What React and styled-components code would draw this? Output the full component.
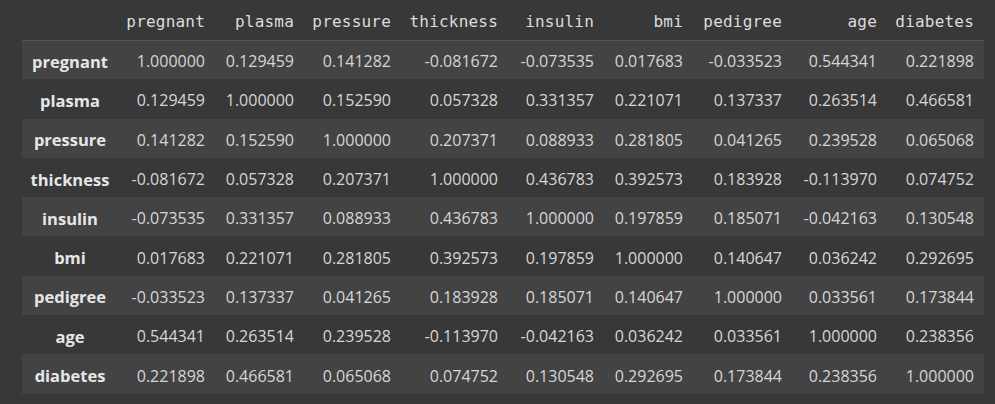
import React from "react";
import styled, { createGlobalStyle } from "styled-components";

const GlobalStyle = createGlobalStyle`
  html, body {
    margin: 0;
    padding: 0;
    background: #383838;
  }
`;

const Page = styled.div`
  width: 995px;
  height: 404px;
  padding-left: 22px;
  box-sizing: border-box;
  overflow: hidden;
`;

const Frame = styled.table`
  border-collapse: collapse;
  table-layout: fixed;
  width: 962px;
  color: #d6d6d6;
  font-family: "Open Sans", "Noto Sans", sans-serif;
  font-size: 16px;
`;

const HeadRow = styled.tr`
  height: 40px;
  border-bottom: 1px solid #555555;
`;

const ColHead = styled.th`
  font-family: "DejaVu Sans Mono", "Liberation Mono", monospace;
  font-size: 16px;
  font-weight: normal;
  color: #dcdcdc;
  text-align: right;
  padding: 3px 10px 0 0;
  white-space: nowrap;
  letter-spacing: 0.2px;
`;

const Row = styled.tr`
  height: 39.3px;
  background: ${(p) => (p.striped ? "#434343" : "transparent")};
`;

const IndexCell = styled.th`
  font-weight: 700;
  font-size: 16.5px;
  color: #e6e6e6;
  text-align: center;
  padding: 3px 0 0;
  white-space: nowrap;
`;

const Cell = styled.td`
  text-align: right;
  padding: 3px 10px 0 0;
  white-space: nowrap;
`;

const widths = [96, 97, 89, 97, 107, 96, 89, 99, 95, 97];

const cols = [
  "pregnant",
  "plasma",
  "pressure",
  "thickness",
  "insulin",
  "bmi",
  "pedigree",
  "age",
  "diabetes",
];

const data = [
  ["1.000000", "0.129459", "0.141282", "-0.081672", "-0.073535", "0.017683", "-0.033523", "0.544341", "0.221898"],
  ["0.129459", "1.000000", "0.152590", "0.057328", "0.331357", "0.221071", "0.137337", "0.263514", "0.466581"],
  ["0.141282", "0.152590", "1.000000", "0.207371", "0.088933", "0.281805", "0.041265", "0.239528", "0.065068"],
  ["-0.081672", "0.057328", "0.207371", "1.000000", "0.436783", "0.392573", "0.183928", "-0.113970", "0.074752"],
  ["-0.073535", "0.331357", "0.088933", "0.436783", "1.000000", "0.197859", "0.185071", "-0.042163", "0.130548"],
  ["0.017683", "0.221071", "0.281805", "0.392573", "0.197859", "1.000000", "0.140647", "0.036242", "0.292695"],
  ["-0.033523", "0.137337", "0.041265", "0.183928", "0.185071", "0.140647", "1.000000", "0.033561", "0.173844"],
  ["0.544341", "0.263514", "0.239528", "-0.113970", "-0.042163", "0.036242", "0.033561", "1.000000", "0.238356"],
  ["0.221898", "0.466581", "0.065068", "0.074752", "0.130548", "0.292695", "0.173844", "0.238356", "1.000000"],
];

const App = () => {
  return (
    <Page>
      <GlobalStyle />
      <Frame>
        <colgroup>
          {widths.map((w, i) => (
            <col key={i} style={{ width: w }} />
          ))}
        </colgroup>
        <thead>
          <HeadRow>
            <ColHead />
            {cols.map((c) => (
              <ColHead key={c}>{c}</ColHead>
            ))}
          </HeadRow>
        </thead>
        <tbody>
          {data.map((row, i) => (
            <Row key={cols[i]} striped={i % 2 === 0}>
              <IndexCell>{cols[i]}</IndexCell>
              {row.map((v, j) => (
                <Cell key={j}>{v}</Cell>
              ))}
            </Row>
          ))}
        </tbody>
      </Frame>
    </Page>
  );
};

export default App;
